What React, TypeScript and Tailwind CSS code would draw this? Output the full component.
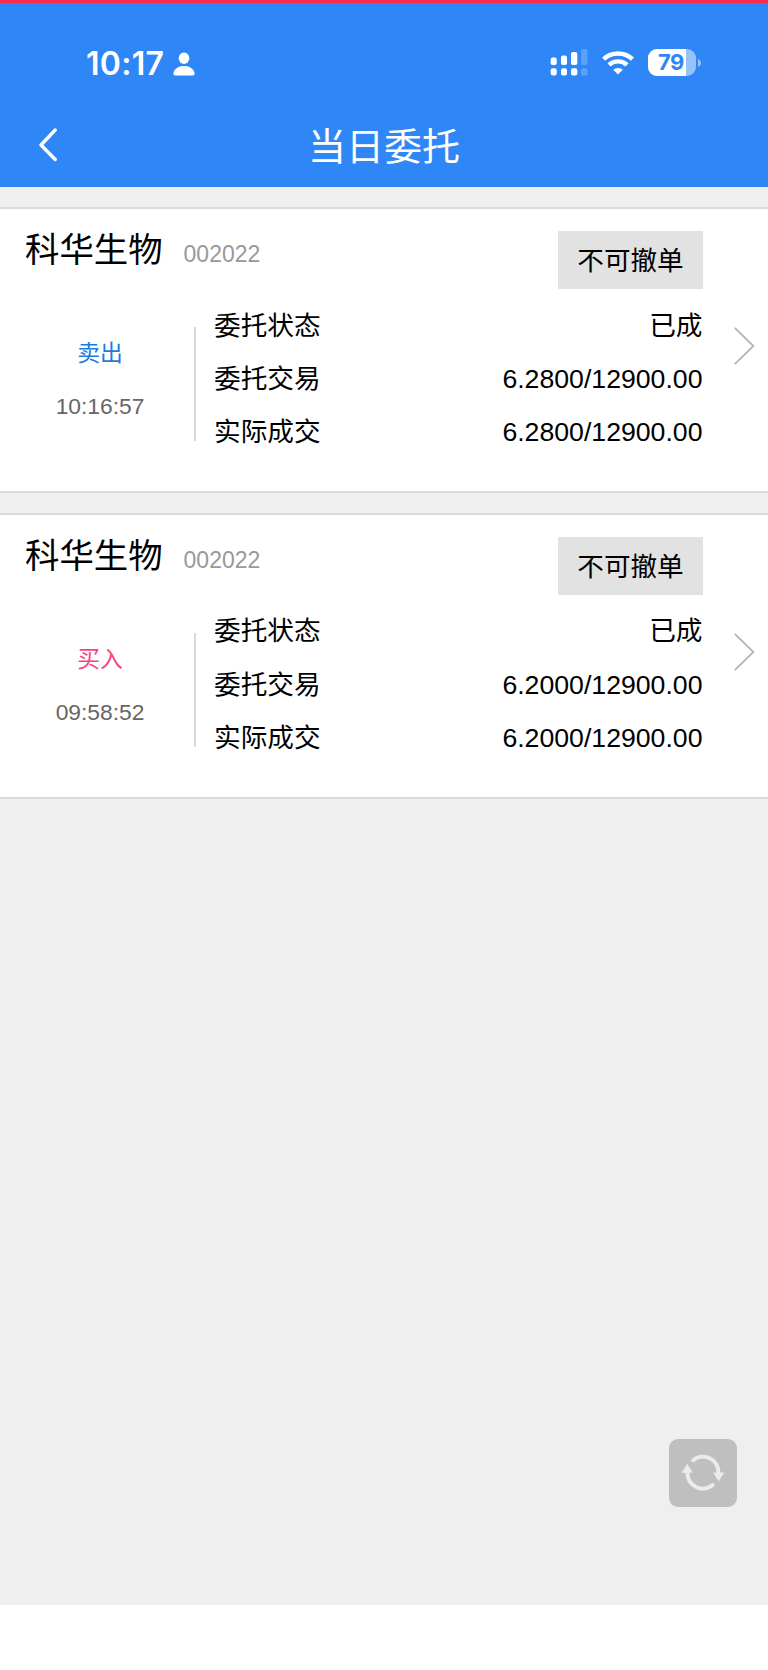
type Order = {
  name: string;
  code: string;
  side: "sell" | "buy";
  time: string;
  status: string;
  entrusted: string;
  dealt: string;
};

const orders: Order[] = [
  {
    name: "科华生物",
    code: "002022",
    side: "sell",
    time: "10:16:57",
    status: "已成",
    entrusted: "6.2800/12900.00",
    dealt: "6.2800/12900.00",
  },
  {
    name: "科华生物",
    code: "002022",
    side: "buy",
    time: "09:58:52",
    status: "已成",
    entrusted: "6.2000/12900.00",
    dealt: "6.2000/12900.00",
  },
];

const PersonIcon = () => (
  <svg width="22" height="24" viewBox="0 0 22 24" fill="#fff">
    <ellipse cx="11" cy="6.2" rx="5.3" ry="5.8" />
    <path d="M2.4 23.4C1 23.4 .2 22.6 .4 21.2C1.2 16.8 5.6 14.1 11 14.1S20.8 16.8 21.6 21.2C21.8 22.6 21 23.4 19.6 23.4Z" />
  </svg>
);

const SignalIcon = () => (
  <svg width="38" height="27" viewBox="0 0 38 27" fill="#fff">
    <rect x="0.7" y="8.4" width="6" height="7.7" rx="1.8" />
    <rect x="11" y="6.6" width="6" height="9.5" rx="1.8" />
    <rect x="21" y="3" width="6.3" height="13.1" rx="1.8" />
    <rect x="31" y="0" width="6.6" height="16.1" rx="1.8" fillOpacity="0.22" />
    <rect x="0.7" y="19.3" width="6" height="7.2" rx="1.9" />
    <rect x="11" y="19.3" width="6" height="7.2" rx="1.9" />
    <rect x="21" y="19.3" width="6.3" height="7.2" rx="1.9" />
    <rect x="31" y="19.3" width="6.6" height="7.2" rx="1.9" fillOpacity="0.22" />
  </svg>
);

const WifiIcon = () => (
  <svg width="32" height="24" viewBox="0 0 32 24" fill="none" stroke="#fff">
    <path d="M1.6 8.1A21.4 21.4 0 0 1 30.4 8.1" strokeWidth="4.6" />
    <path d="M7 13.9A13.3 13.3 0 0 1 25 13.9" strokeWidth="4.4" />
    <path d="M11.2 18.8A7.2 7.2 0 0 1 20.8 18.8L16 23.6Z" fill="#fff" stroke="none" />
  </svg>
);

const BatteryIcon = () => (
  <div className="flex items-center">
    <div className="flex h-[27px] w-12 items-center overflow-hidden rounded-[9px] bg-white/50">
      <div className="h-full w-[38px] bg-white pl-[10px] font-[Inter,sans-serif] text-[22px] leading-[27px] font-bold tracking-[-0.5px] text-[#2f86f6]">
        79
      </div>
    </div>
    <svg className="ml-[2px]" width="3" height="8" viewBox="0 0 3 8">
      <path d="M0 0C4 1.5 4 6.5 0 8Z" fill="#fff" fillOpacity="0.5" />
    </svg>
  </div>
);

const RefreshIcon = () => (
  <svg width="44" height="40" viewBox="0 0 44 40" fill="none">
    <path d="M12.2 7.2C21 -.4 37.5 4.5 37.5 20.5" stroke="#ebebeb" strokeWidth="4" strokeLinecap="round" />
    <path d="M31.6 32.1C22.8 40 6.2 34.5 6.2 18.5" stroke="#ebebeb" strokeWidth="4" strokeLinecap="round" />
    <path d="M32 19.6H43.2L37.6 28.6Z" fill="#ebebeb" />
    <path d="M.6 19.8H11.8L6.2 10.8Z" fill="#ebebeb" />
  </svg>
);

const Row = ({ label, value }: { label: string; value: string }) => (
  <div className="flex h-[53.3px] items-center justify-between">
    <span>{label}</span>
    <span>{value}</span>
  </div>
);

const OrderCard = ({ order }: { order: Order }) => (
  <section className="h-[286.2px] border-y-2 border-[#dadada] bg-white text-black">
    <div className="flex h-[84px] items-start justify-between pt-[22px] pr-[65px] pl-[25px]">
      <div className="-mt-px flex items-baseline gap-[21px]">
        <h2 className="text-[34.4px] leading-[40px]">{order.name}</h2>
        <span className="text-[23px] text-[#999]">{order.code}</span>
      </div>
      <button className="h-[58px] w-[145px] bg-[#e2e2e2] pt-px text-[26.6px] leading-[58px]">
        不可撤单
      </button>
    </div>

    <div className="flex">
      <div className="flex w-[194px] flex-col items-center pt-[34px] pl-[6px] text-[22.8px] leading-[53px]">
        <span className={order.side === "sell" ? "text-[#1b7be0]" : "text-[#f9437f]"}>
          {order.side === "sell" ? "卖出" : "买入"}
        </span>
        <span className="text-[#666]">{order.time}</span>
      </div>
      <div className="mt-[34px] h-[114px] w-[2px] bg-[#dadada]" />
      <div className="ml-[18px] w-[488.5px] pt-[6px] text-[26.67px]">
        <Row label="委托状态" value={order.status} />
        <Row label="委托交易" value={order.entrusted} />
        <Row label="实际成交" value={order.dealt} />
      </div>
      <svg className="mt-[34px] ml-[31.5px]" width="21" height="38" viewBox="0 0 21 38" fill="none">
        <path d="M.8 .8L19.4 19L.8 37.2" stroke="#b5b5b5" strokeWidth="1.8" />
      </svg>
    </div>
  </section>
);

const App = () => {
  return (
    <div className="flex h-[1670px] w-[768px] flex-col bg-white font-['Liberation_Sans','Noto_Sans_CJK_SC',sans-serif]">
      <header className="h-[187px] border-t-[3px] border-[#fb2b4c] bg-[#2f86f6] text-white">
        <div className="flex h-[100px] items-start justify-between pt-[46px] pr-[67px] pl-[86px]">
          <div className="flex items-center pt-px">
            <span className="w-[87px] font-[Inter,sans-serif] text-[32px] leading-[27px] font-semibold tracking-[0.3px]">
              10:17
            </span>
            <PersonIcon />
          </div>
          <div className="flex items-center">
            <SignalIcon />
            <div className="mr-[14px] ml-[14px]">
              <WifiIcon />
            </div>
            <BatteryIcon />
          </div>
        </div>
        <div className="flex h-[84px] items-center pl-[38px]">
          <svg width="20" height="34" viewBox="0 0 20 34" fill="none">
            <path d="M17.2 2L3 17L17.2 31.5" stroke="#fff" strokeWidth="3.4" strokeLinecap="round" strokeLinejoin="round" />
          </svg>
          <h1 className="w-[652px] pt-1 text-center text-[38px] leading-[40px] font-normal">当日委托</h1>
        </div>
      </header>

      <main className="flex h-[1418px] flex-col gap-[19.4px] bg-[#efefef] pt-5">
        {orders.map((order) => (
          <OrderCard key={order.time} order={order} />
        ))}
        <button className="mt-auto mr-[31px] mb-[98px] flex size-[68.5px] items-center justify-center self-end rounded-[9px] bg-[#bfbfbf]">
          <RefreshIcon />
        </button>
      </main>
    </div>
  );
};

export default App;
